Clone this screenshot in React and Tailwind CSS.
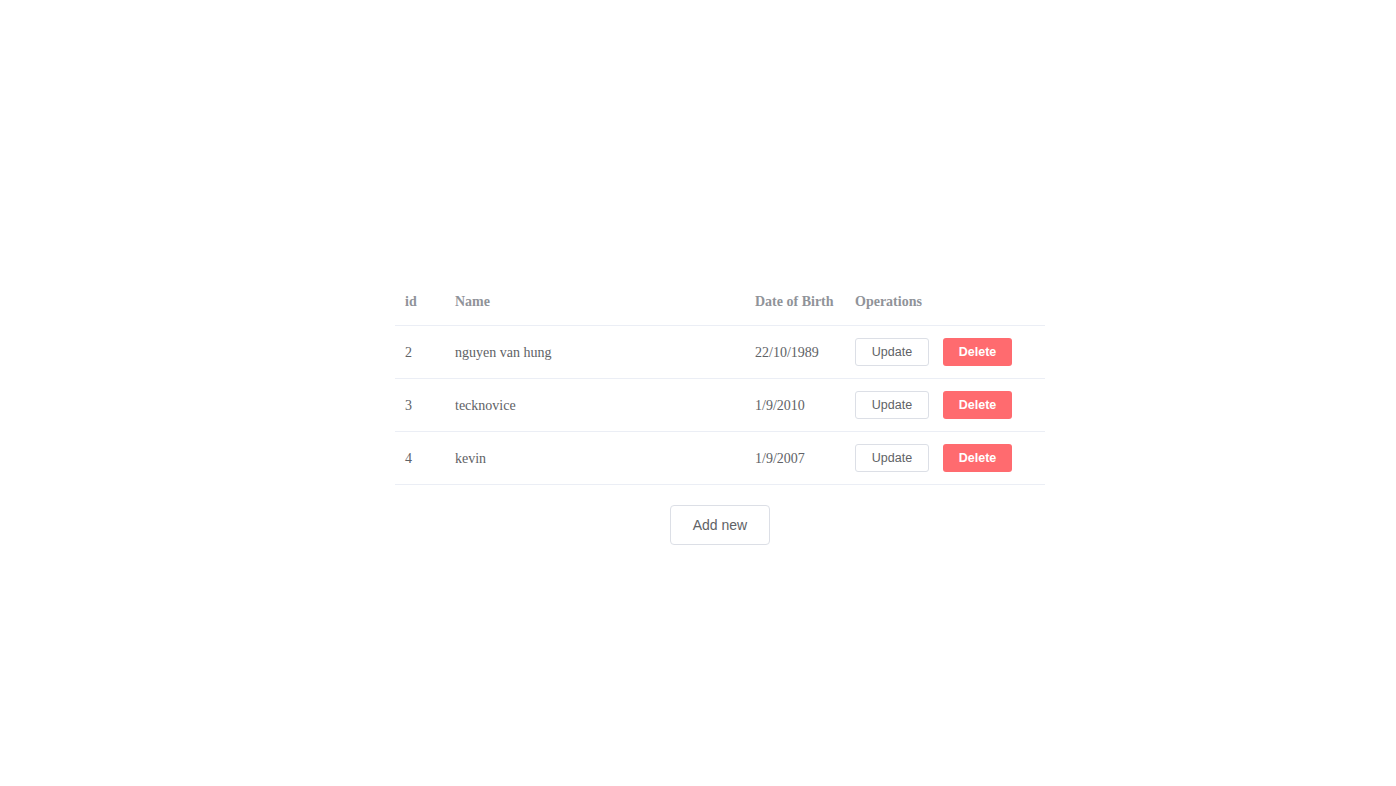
import React from "react";

const rows = [
  { id: 2, name: "nguyen van hung", dob: "22/10/1989" },
  { id: 3, name: "tecknovice", dob: "1/9/2010" },
  { id: 4, name: "kevin", dob: "1/9/2007" },
];

const serif = "font-['Liberation_Serif','Times_New_Roman',serif]";
const sans = "font-['Liberation_Sans',Arial,sans-serif]";

const App = () => {
  return (
    <div className="min-h-[786px] w-full bg-white pt-[278px] pl-[395px]">
      <div className="w-[650px]">
        <div className={`flex h-[48px] items-center border-b border-[#ebeef5] text-[14px] font-bold text-[#909399] ${serif}`}>
          <div className="w-[50px] pl-[10px]">id</div>
          <div className="w-[300px] pl-[10px]">Name</div>
          <div className="w-[100px] pl-[10px]">Date of Birth</div>
          <div className="pl-[10px]">Operations</div>
        </div>
        {rows.map((r) => (
          <div key={r.id} className={`flex h-[53px] items-center border-b border-[#ebeef5] text-[14px] text-[#606266] ${serif}`}>
            <div className="w-[50px] pl-[10px]">{r.id}</div>
            <div className="w-[300px] pl-[10px]">{r.name}</div>
            <div className="w-[100px] pl-[10px]">{r.dob}</div>
            <div className="flex items-center pl-[10px]">
              <button className={`h-[28px] w-[74px] rounded-[3px] border border-[#dcdfe6] bg-white text-[12.5px] text-[#606266] ${sans}`}>
                Update
              </button>
              <button className={`ml-[14px] h-[28px] w-[69px] rounded-[3px] bg-[#ff6b6f] text-[12.5px] font-bold text-white ${sans}`}>
                Delete
              </button>
            </div>
          </div>
        ))}
        <div className="flex justify-center pt-[20px]">
          <button className={`h-[40px] w-[100px] rounded-[4px] border border-[#dcdfe6] bg-white text-[14px] text-[#606266] ${sans}`}>
            Add new
          </button>
        </div>
      </div>
    </div>
  );
};

export default App;
